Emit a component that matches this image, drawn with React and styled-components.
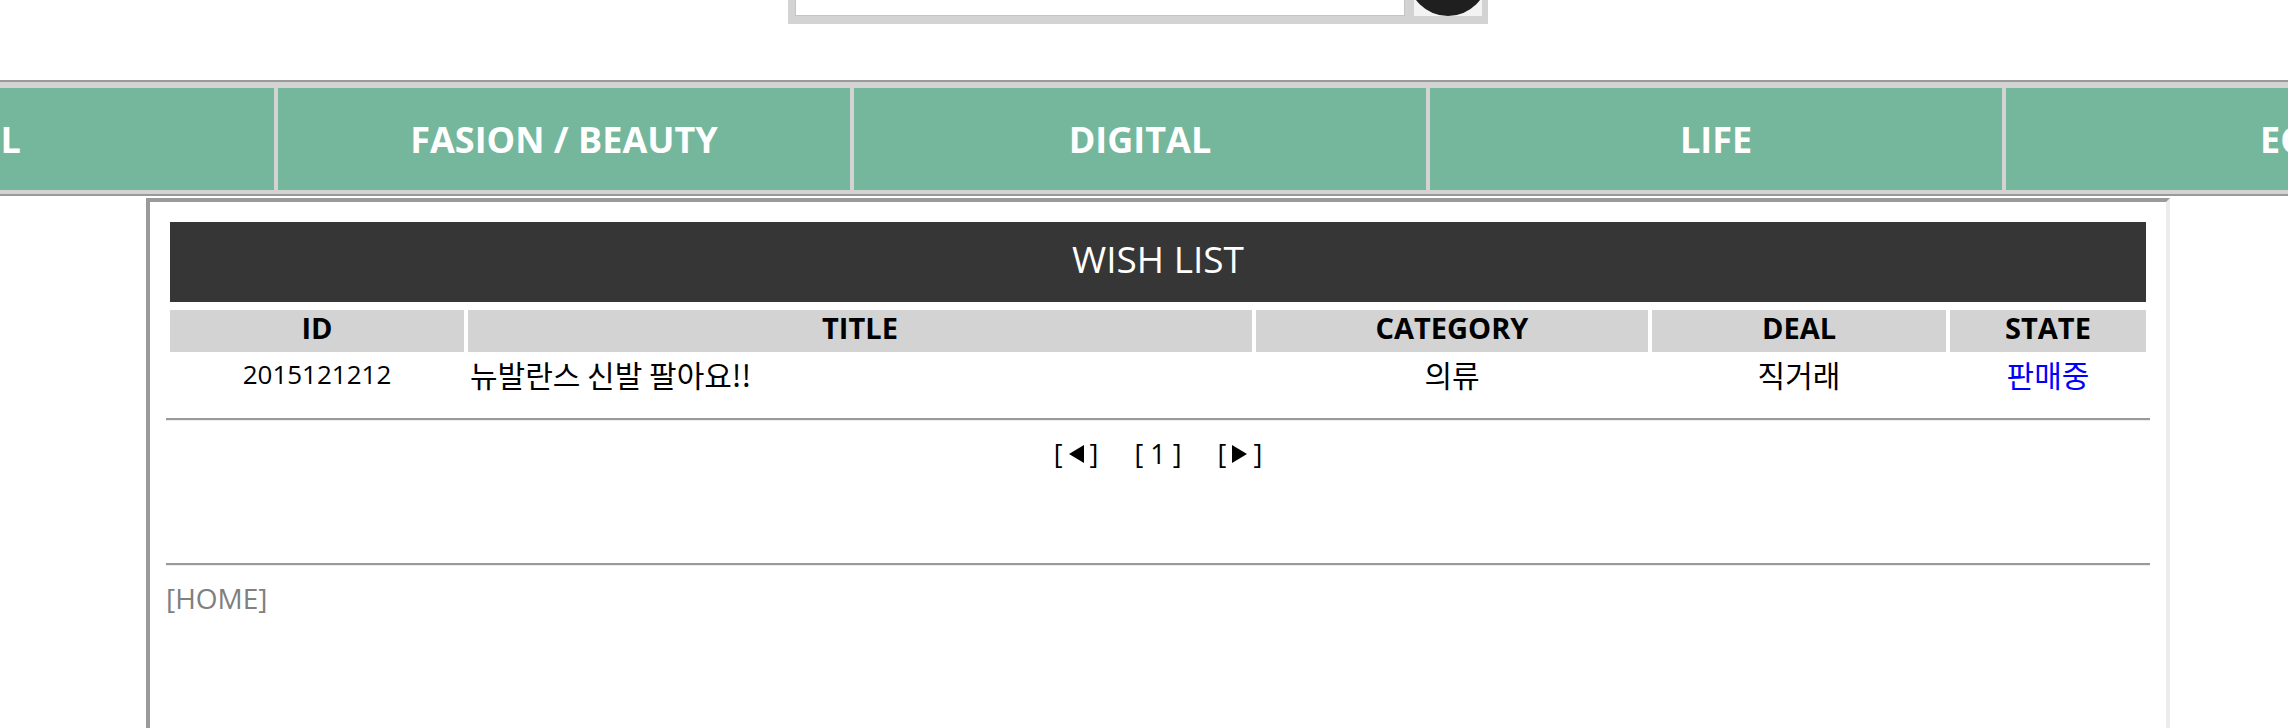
import React from "react";
import styled, { createGlobalStyle } from "styled-components";

const GlobalStyle = createGlobalStyle`
  html, body {
    margin: 0;
    padding: 0;
    overflow: hidden;
    background: #fff;
  }
  body {
    font-family: "Open Sans", "Noto Sans CJK KR", sans-serif;
    color: #000;
  }
`;

const categories = ["ALL", "FASION / BEAUTY", "DIGITAL", "LIFE", "ECT"];

const columns = [
    { key: "id", label: "ID" },
    { key: "title", label: "TITLE", align: "left", hangul: true },
    { key: "category", label: "CATEGORY", hangul: true },
    { key: "deal", label: "DEAL", hangul: true },
    { key: "state", label: "STATE", color: "#0000ff", hangul: true },
];

const wishes = [
    { id: "2015121212", title: "뉴발란스 신발 팔아요!!", category: "의류", deal: "직거래", state: "판매중" },
];

export default function App()
{
    return (
        <Page>
            <GlobalStyle />
            <SearchForm onSubmit={(e) => e.preventDefault()}>
                <SearchInput type="text" />
                <SearchButton type="submit" aria-label="search">
                    <SearchIcon />
                </SearchButton>
            </SearchForm>

            <Nav>
                {categories.map((c) => (
                    <NavItem key={c}>{c}</NavItem>
                ))}
            </Nav>

            <Board>
                <TableArea>
                    <Title>WISH LIST</Title>
                    <HeadRow>
                        {columns.map((col) => (
                            <HeadCell key={col.key}>{col.label}</HeadCell>
                        ))}
                    </HeadRow>
                    {wishes.map((w) => (
                        <DataRow key={w.id}>
                            {columns.map((col) => (
                                <DataCell
                                    key={col.key}
                                    $align={col.align}
                                    $color={col.color}
                                    $hangul={col.hangul}
                                >
                                    {w[col.key]}
                                </DataCell>
                            ))}
                        </DataRow>
                    ))}
                </TableArea>

                <Divider $top={22} />
                <Pager>
                    <PageLink>[<Arrow $dir="left" />]</PageLink>
                    <PageLink>[ 1 ]</PageLink>
                    <PageLink>[<Arrow $dir="right" />]</PageLink>
                </Pager>
                <Divider />
                <HomeLink>[HOME]</HomeLink>
            </Board>
        </Page>
    );
}

const Page = styled.div`
    width: 2288px;
    overflow: hidden;
`;

const SearchForm = styled.form`
    display: flex;
    gap: 9px;
    width: 700px;
    height: 76px;
    box-sizing: border-box;
    margin: -52px 0 0 788px;
    padding: 8px 6px 8px 7px;
    background-color: #d3d3d3;
`;

const SearchInput = styled.input`
    width: 610px;
    height: 60px;
    box-sizing: border-box;
    border: 1px solid #c4c4c4;
    border-top-color: #9a9a9a;
    background: #fff;
`;

const SearchButton = styled.button`
    display: flex;
    align-items: flex-end;
    justify-content: center;
    width: 68px;
    height: 60px;
    padding: 0;
    border: none;
    overflow: hidden;
    background-color: #f3f3f3;
`;

const SearchIcon = styled.span`
    flex-shrink: 0;
    width: 80px;
    height: 80px;
    border-radius: 50%;
    background-color: #1f1f1f;
`;

const Nav = styled.nav`
    display: flex;
    justify-content: center;
    gap: 4px;
    margin-top: 56px;
    padding: 6px 8px 4px 0;
    border-top: 2px solid #9a9a9a;
    border-bottom: 2px solid #9a9a9a;
    background-color: #d3d3d3;
`;

const NavItem = styled.div`
    display: flex;
    align-items: center;
    justify-content: center;
    flex: 0 0 572px;
    height: 102px;
    background-color: #75b79c;
    color: #fff;
    font-size: 36px;
    font-weight: 700;
    white-space: nowrap;
`;

const Board = styled.main`
    width: 2024px;
    min-height: 600px;
    box-sizing: border-box;
    margin: 2px 0 0 146px;
    padding: 16px;
    border: 4px solid;
    border-color: #9a9a9a #ececec #ececec #9a9a9a;
`;

const TableArea = styled.section`
    padding: 4px;
`;

const Title = styled.h2`
    display: flex;
    align-items: center;
    justify-content: center;
    height: 80px;
    box-sizing: border-box;
    margin: 0;
    padding-bottom: 8px;
    background-color: #363636;
    color: #fff;
    font-size: 37px;
    font-weight: 400;
`;

const Row = styled.div`
    display: grid;
    grid-template-columns: 15fr 40fr 20fr 15fr 10fr;
    column-gap: 4px;
`;

const HeadRow = styled(Row)`
    margin-top: 8px;
`;

const HeadCell = styled.div`
    display: flex;
    align-items: center;
    justify-content: center;
    height: 42px;
    box-sizing: border-box;
    padding-bottom: 7px;
    background-color: #d3d3d3;
    font-size: 29px;
    font-weight: 700;
`;

const DataRow = styled(Row)`
    margin-top: 4px;
`;

const DataCell = styled.div`
    display: flex;
    align-items: center;
    justify-content: ${(p) => (p.$align === "left" ? "flex-start" : "center")};
    height: 36px;
    padding-left: ${(p) => (p.$align === "left" ? "2px" : "0")};
    color: ${(p) => p.$color || "#000"};
    font-family: ${(p) => (p.$hangul ? `"Noto Sans CJK KR", "Open Sans"` : `"Open Sans", "Noto Sans CJK KR"`)}, sans-serif;
    font-size: ${(p) => (p.$hangul ? "30px" : "26px")};
    white-space: nowrap;
`;

const Divider = styled.hr`
    height: 0;
    margin: ${(p) => p.$top || 0}px 0 0;
    border: 0;
    border-top: 2px solid #9a9a9a;
    border-bottom: 1px solid #ececec;
`;

const Pager = styled.div`
    display: flex;
    justify-content: center;
    gap: 36px;
    height: 142px;
    box-sizing: border-box;
    padding-top: 18px;
    font-size: 27px;
    line-height: 30px;
`;

const PageLink = styled.a`
    display: inline-flex;
    align-items: center;
    height: 30px;
    color: #000;
    white-space: pre;
    cursor: pointer;
`;

const Arrow = styled.span`
    display: inline-block;
    width: 0;
    height: 0;
    margin: 0 6px;
    border-top: 9px solid transparent;
    border-bottom: 9px solid transparent;
    ${(p) => (p.$dir === "left" ? "border-right: 15px solid #000;" : "border-left: 15px solid #000;")}
`;

const HomeLink = styled.a`
    display: block;
    margin-top: 14px;
    color: #808080;
    font-size: 28px;
    line-height: 36px;
    cursor: pointer;
`;
